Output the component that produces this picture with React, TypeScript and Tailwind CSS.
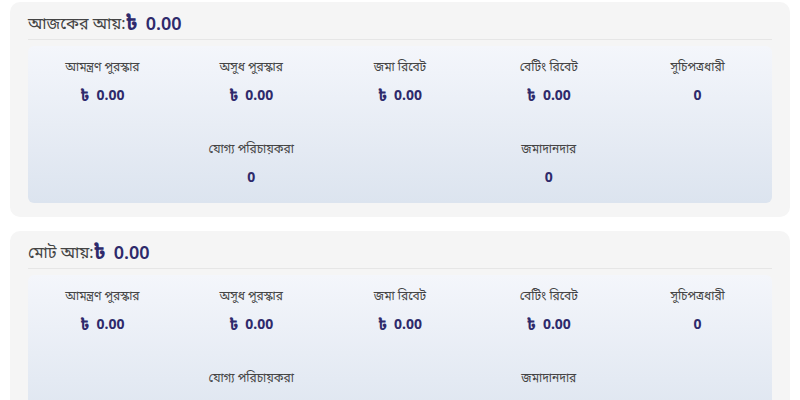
const stats = [
  { label: "আমন্ত্রণ পুরস্কার", value: "0.00", taka: true, col: "" },
  { label: "অসুধ পুরস্কার", value: "0.00", taka: true, col: "" },
  { label: "জমা রিবেট", value: "0.00", taka: true, col: "" },
  { label: "বেটিং রিবেট", value: "0.00", taka: true, col: "" },
  { label: "সুচিপত্রধারী", value: "0", taka: false, col: "" },
  { label: "যোগ্য পরিচায়করা", value: "0", taka: false, col: "col-start-2" },
  { label: "জমাদানদার", value: "0", taka: false, col: "col-start-4" },
];

const IncomeCard = ({ title }: { title: string }) => (
  <div className="rounded-[10px] bg-[#f5f5f5] px-[18px] pt-[9px] pb-[14px]">
    {/* Header */}
    <div className="flex items-center border-b border-[#e6e6e6] pb-[4px]">
      <span className="text-[16px] leading-6 text-[#444]">{title}:</span>
      <span className="text-[20px] leading-6 font-bold text-[#2e2a6b]">৳</span>
      <span className="ml-[8px] text-[18px] leading-6 font-semibold text-[#2e2a6b]">0.00</span>
    </div>

    {/* Stats */}
    <div className="mt-[6px] grid grid-cols-5 gap-y-[36px] rounded-[6px] bg-gradient-to-b from-[#f4f6fb] to-[#dce4ef] pt-[13px] pb-[16px]">
      {stats.map((s) => (
        <div key={s.label} className={`flex flex-col items-center gap-[10px] ${s.col}`}>
          <span className="text-[12px] leading-4 text-[#444]">{s.label}</span>
          <span className="flex items-center text-[14px] leading-5 font-bold text-[#2e2a6b]">
            {s.taka && <span className="mr-[7px] text-[15px]">৳</span>}
            {s.value}
          </span>
        </div>
      ))}
    </div>
  </div>
);

export default function App() {
  return (
    <div className="min-h-screen bg-white px-[10px] pt-[2px] flex flex-col gap-[14px]" style={{ fontFamily: '"Noto Sans", "Noto Sans Bengali", sans-serif' }}>
      <IncomeCard title="আজকের আয়" />
      <IncomeCard title="মোট আয়" />
    </div>
  );
}
